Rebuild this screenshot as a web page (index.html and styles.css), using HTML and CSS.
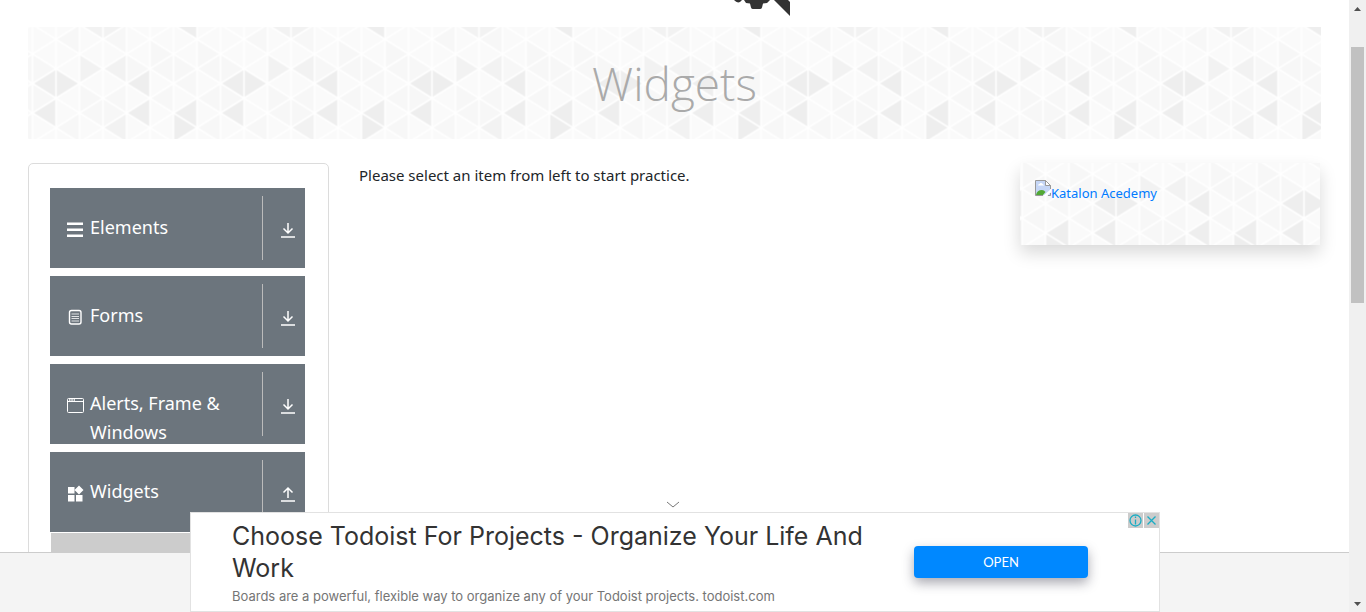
FILE: index.html
```html
<!DOCTYPE html>
<html lang="en">
<head>
<meta charset="utf-8">
<title>Widgets</title>
<link rel="stylesheet" href="styles.css">
</head>
<body>
<svg class="defs" aria-hidden="true">
  <defs>
    <pattern id="tri" width="188" height="118" patternUnits="userSpaceOnUse" patternTransform="translate(4.5 -2.5)">
      <rect width="188" height="118" fill="#fafafa"/>
      <g transform="scale(23.5 14.75)">
        <path fill="#f7f7f7" d="M1 1l1-1v2zM0 4l1 1l-1 1zM2 4l1 1l-1 1zM4 2l1 1l-1 1zM5 3l1-1v2zM6 4l1-1v2zM3 5l1-1v2zM7 3l1-1v2zM3 5l1 1l-1 1zM5 5l1-1v2zM7 5l1-1v2zM7 1l1 1l-1 1zM5 1l1 1l-1 1zM1 7l1-1v2zM2 6l1-1v2zM0 2l1 1l-1 1zM6 2l1 1l-1 1zM3 1l1-1v2zM7 7l1-1v2z"/>
        <path fill="#f2f2f2" d="M2 2l1 1l-1 1zM3 3l1-1v2zM3 7l1-1v2zM2 0l1-1v2zM3-1l1 1l-1 1z"/>
        <path fill="#eee" d="M0 4l1-1v2zM1 3l1 1l-1 1zM0 6l1-1v2zM4 4l1-1v2zM4 6l1-1v2zM6 6l1-1v2zM6 6l1 1l-1 1zM6 0l1-1v2z"/>
        <path class="mesh" d="M0 0v8M1 0v8M2 0v8M3 0v8M4 0v8M5 0v8M6 0v8M7 0v8M8 0v8M0 0l8 8M0 2l6 6M0 4l4 4M0 6l2 2M2 0l6 6M4 0l4 4M6 0l2 2M8 0l-8 8M6 0l-6 6M4 0l-4 4M2 0l-2 2M8 2l-6 6M8 4l-4 4M8 6l-2 2"/>
      </g>
    </pattern>
    <pattern id="tri-card" href="#tri" patternTransform="translate(72.5 -18.5)"/>
    <symbol id="down" viewBox="0 0 16 16"><path d="M8 1v10M3.500 6.500L8 11l4.500-4.500M1 15h14"/></symbol>
    <symbol id="up" viewBox="0 0 16 16"><path d="M8 12V2M3.500 6.500L8 2l4.500 4.500M1 15h14"/></symbol>
  </defs>
</svg>

<div class="page">
  <header class="top">
    <svg class="logo" viewBox="0 0 56 16" aria-label="Logo">
      <path fill="#333" d="M0 0h8L6 2Q3 3.500 0 0zM10 0h26l-3 3-4 .5-1 4q-.5 1.500-2 1.500h-7q-1.500 0-2-1.500l-1-4-4-.5zM40 0h14l2 2v14z"/>
    </svg>
  </header>

  <div class="banner">
    <svg class="texture" aria-hidden="true"><rect width="100%" height="100%" fill="url(#tri)"/></svg>
    <h1>Widgets</h1>
  </div>

  <main class="columns">
    <nav class="panel">
      <button class="group">
        <svg class="icon" viewBox="0 0 18 18"><path fill="#fff" d="M1 2.500h16v2.500H1zM1 8.500h16V11H1zM1 14.500h16V17H1z"/></svg>
        <span class="name">Elements</span>
        <span class="fold"><svg><use href="#down"/></svg></span>
      </button>
      <button class="group">
        <svg class="icon" viewBox="0 0 18 18"><g fill="none" stroke="#fff"><rect x="3.500" y="2.500" width="11.500" height="13.500" rx="2" stroke-width="1.400"/><path d="M5.500 6h7.500M5.500 8.500h7.500M5.500 10.500h7.500M5.500 13h7.500" stroke-opacity=".8"/></g></svg>
        <span class="name">Forms</span>
        <span class="fold"><svg><use href="#down"/></svg></span>
      </button>
      <button class="group">
        <svg class="icon" viewBox="0 0 18 18"><g fill="none" stroke="#fff"><rect x="1.500" y="2.500" width="16" height="14" rx="1"/><path d="M1.500 5.500h16"/><path d="M3 4h6" stroke-dasharray="1.500 .8" stroke-width="1.500"/></g></svg>
        <span class="name">Alerts, Frame &amp; Windows</span>
        <span class="fold"><svg><use href="#down"/></svg></span>
      </button>
      <div>
        <button class="group">
          <svg class="icon" viewBox="0 0 18 18"><path fill="#fff" d="M2 3h6.500v6.500H2zM2 11h6.500v6.500H2zM10 11h6.500v6.500H10zM13 1.500l4.500 4.500-4.500 4.500L8.500 6z"/></svg>
          <span class="name">Widgets</span>
          <span class="fold"><svg><use href="#up"/></svg></span>
        </button>
        <div class="items"></div>
      </div>
    </nav>

    <p class="hint">Please select an item from left to start practice.</p>

    <aside class="promo">
      <svg class="texture" aria-hidden="true"><rect width="100%" height="100%" fill="url(#tri-card)"/></svg>
      <a href="#">
        <svg class="broken" viewBox="0 0 16 16" aria-hidden="true">
          <path fill="#c5d6f6" d="M.5.500h10l5 5v10H.5z"/>
          <path fill="#fff" d="M3 5.500q0-1.500 1.500-1.500Q5 2.500 6.500 3T8 4.500q1 0 1 1z"/>
          <path fill="#51a834" d="M1 15q1-5 6-5 2 0 3.500 2L8 15z"/>
          <path fill="#fff" d="M8 16l8-7v3l-4 4z"/>
          <path fill="#fff" stroke="#999" d="M10.500.500v5h5z"/>
          <path fill="none" stroke="#999" d="M8 15.500H.5V.500h10l5 5V9M13 15.500h2.500V13"/>
        </svg>Katalon Acedemy</a>
    </aside>
  </main>
</div>

<footer class="footer"></footer>

<section class="ad">
  <button class="collapse" aria-label="Collapse"><svg viewBox="0 0 14 8"><path d="M1 1l6 5 6-5"/></svg></button>
  <div class="copy">
    <h2>Choose Todoist For Projects - Organize Your Life And Work</h2>
    <p>Boards are a powerful, flexible way to organize any of your Todoist projects. todoist.com</p>
  </div>
  <button class="open">OPEN</button>
  <div class="choices">
    <button aria-label="Ad info"><svg viewBox="0 0 15 15"><circle cx="7.500" cy="7.500" r="5.500"/><path d="M7.500 3.500v1.500M7.500 6.500v5"/></svg></button>
    <button aria-label="Close ad"><svg viewBox="0 0 15 15"><path d="M3.500 3.500l8 8M11.500 3.500l-8 8"/></svg></button>
  </div>
</section>

<div class="scrollbar" aria-hidden="true">
  <svg viewBox="0 0 17 17"><path d="M5 11h7L8.500 7z"/></svg>
  <div class="track"><div class="thumb"></div></div>
  <svg viewBox="0 0 17 17"><path d="M5 7h7l-3.500 4z"/></svg>
</div>
</body>
</html>
```
FILE: styles.css
```css
* { box-sizing: border-box; }

body {
  display: flex;
  flex-direction: column;
  margin: 0;
  height: 100vh;
  overflow: hidden;
  padding-right: 17px;
  background: #fff;
  color: #212529;
  font: 15px/24px "Noto Sans", "Open Sans", sans-serif;
}

h1, h2, p { margin: 0; font-weight: 400; }
button { border: 0; margin: 0; padding: 0; background: none; color: inherit; font: inherit; }
svg { display: block; }

.defs { position: absolute; width: 0; height: 0; }
.mesh { fill: none; stroke: #fff; stroke-width: 1.5px; vector-effect: non-scaling-stroke; }

.page {
  display: flex;
  flex: 1;
  flex-direction: column;
  min-height: 0;
  padding: 0 28px;
  overflow: hidden;
}

.top {
  display: flex;
  flex: none;
  justify-content: center;
  height: 27px;
  padding-left: 175px;
}
.logo { width: 56px; height: 16px; }

.banner {
  position: relative;
  display: flex;
  flex: none;
  align-items: center;
  justify-content: center;
  height: 112px;
}
.texture { position: absolute; inset: 0; width: 100%; height: 100%; }
.banner h1 {
  position: relative;
  color: #aaa;
  font: 300 46px/56px "Open Sans", sans-serif;
}

.columns {
  display: grid;
  grid-template-columns: 301px 1fr 300px;
  gap: 30px;
  align-items: start;
  padding: 24px 1px 0 0;
}

.panel {
  display: grid;
  gap: 8px;
  padding: 24px 23px 24px 21px;
  border: 1px solid #dcdcdc;
  border-radius: 5px;
}

.group {
  display: grid;
  grid-template-columns: 18px 1fr 43px;
  column-gap: 6px;
  align-items: start;
  width: 100%;
  height: 80px;
  padding: 8px 0 8px 16px;
  background: #6c757d;
  color: #fff;
  font-size: 18px;
  line-height: 29px;
  text-align: left;
}
.icon { width: 18px; height: 18px; margin-top: 24px; }
.name { padding-top: 17px; }
.fold {
  display: grid;
  place-items: center;
  height: 64px;
  padding: 4px 0 0 8px;
  border-left: 1px solid #bbb;
}
.fold svg { width: 16px; height: 16px; fill: none; stroke: #fff; stroke-width: 1.5px; }
.items { height: 120px; margin: 1px 1px 0; background: #ccc; }

.promo {
  position: relative;
  height: 82px;
  padding: 17px 15px;
  box-shadow: 0 8px 16px rgba(0, 0, 0, .15);
}
.promo a {
  position: relative;
  display: flex;
  color: #007bff;
  font-size: 13px;
  line-height: 26px;
  text-decoration: none;
}
.broken { width: 16px; height: 16px; }

.footer {
  flex: none;
  height: 60px;
  border-top: 1px solid #ccc;
  background: #f4f4f4;
}

.ad {
  position: fixed;
  bottom: 0;
  left: calc(50% - 493px);
  display: flex;
  align-items: flex-start;
  width: 970px;
  height: 100px;
  padding: 7px 71px 0 41px;
  border: 1px solid #e2e2e2;
  background: #fff;
}
.copy { flex: 1; padding-right: 30px; }
.copy h2 { color: #333; font: 25px/32px Inter, sans-serif; }
.copy p { color: #757575; font: 13px/24px Inter, sans-serif; white-space: nowrap; }
.open {
  width: 174px;
  height: 32px;
  margin-top: 26px;
  border-radius: 4px;
  background: #08f;
  box-shadow: 0 5px 12px rgba(40, 40, 60, .4);
  color: #fff;
  font: 13px/32px Lato, sans-serif;
}
.collapse { position: absolute; top: -12px; left: 475px; }
.collapse svg { width: 14px; height: 8px; fill: none; stroke: #777; }
.choices { position: absolute; top: 0; right: 0; display: flex; gap: 1px; }
.choices button { background: #ccc; }
.choices svg { width: 15px; height: 15px; fill: none; stroke: #1aadc4; stroke-width: 1.3px; }

.scrollbar {
  position: fixed;
  inset: 0 0 0 auto;
  display: flex;
  flex-direction: column;
  width: 17px;
  background: #f0f0f0;
}
.scrollbar > svg { width: 17px; height: 17px; fill: #505050; }
.track { flex: 1; padding: 30px 2px 0; }
.thumb { height: 256px; background: #c1c1c1; }
```
